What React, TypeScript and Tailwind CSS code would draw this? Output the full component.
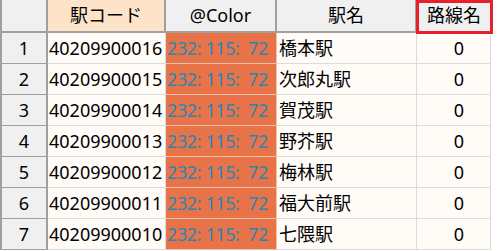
import React from "react";

const rows = [
  ["40209900016", "橋本駅"],
  ["40209900015", "次郎丸駅"],
  ["40209900014", "賀茂駅"],
  ["40209900013", "野芥駅"],
  ["40209900012", "梅林駅"],
  ["40209900011", "福大前駅"],
  ["40209900010", "七隈駅"],
];

export default function App() {
  return (
    <div
      className="w-[501px] h-[251px] overflow-hidden bg-white text-[18px] text-black"
      style={{ fontFamily: '"Noto Sans", "Noto Sans CJK JP", sans-serif' }}
    >
      <div className="flex flex-col border-l-2 border-[#a0a0a0] w-[491px]">
        {/* header */}
        <div className="flex h-[33px] border-b-2 border-[#a0a0a0] leading-[31px]">
          <div className="w-[46px] shrink-0 bg-[#f0f0f0] border-r-2 border-[#a0a0a0]" />
          <div className="w-[118px] shrink-0 bg-[#fde4c8] border-r-2 border-[#a0a0a0] text-center">駅コード</div>
          <div className="w-[111px] shrink-0 bg-[#f0f0f0] border-r-2 border-[#a0a0a0] text-center">@Color</div>
          <div className="w-[140px] shrink-0 bg-[#f0f0f0] border-r-2 border-[#a0a0a0] text-center">駅名</div>
          <div className="relative w-[74px] shrink-0 bg-[#f0f0f0] text-center">
            路線名
            <div className="absolute left-[-1px] top-0 w-[77px] h-[34px] border-[3px] border-[#e8202a]" />
          </div>
        </div>
        {rows.map(([code, name], i) => (
          <div key={code} className="flex h-[31px] leading-[30px]">
            <div className="w-[46px] shrink-0 bg-[#f0f0f0] border-r-2 border-b border-[#a0a0a0] text-center">
              {i + 1}
            </div>
            <div className="w-[118px] shrink-0 bg-[#fffbf7] border-r border-b border-[#dcdcdc] pl-[1px]">
              {code}
            </div>
            <div className="w-[111px] shrink-0 bg-[#e87348] border-r border-b border-[#f0c0a8] pl-[1px] text-[#2a86b4] whitespace-pre tracking-[-0.4px] overflow-hidden">
              {"232: 115:  72"}
            </div>
            <div className="w-[140px] shrink-0 bg-[#fffbf7] border-r border-b border-[#dcdcdc] pl-[2px]">
              {name}
            </div>
            <div className="w-[74px] shrink-0 bg-[#fffbf7] border-r border-b border-[#dcdcdc] text-right pr-[26px]">
              0
            </div>
          </div>
        ))}
      </div>
    </div>
  );
}
